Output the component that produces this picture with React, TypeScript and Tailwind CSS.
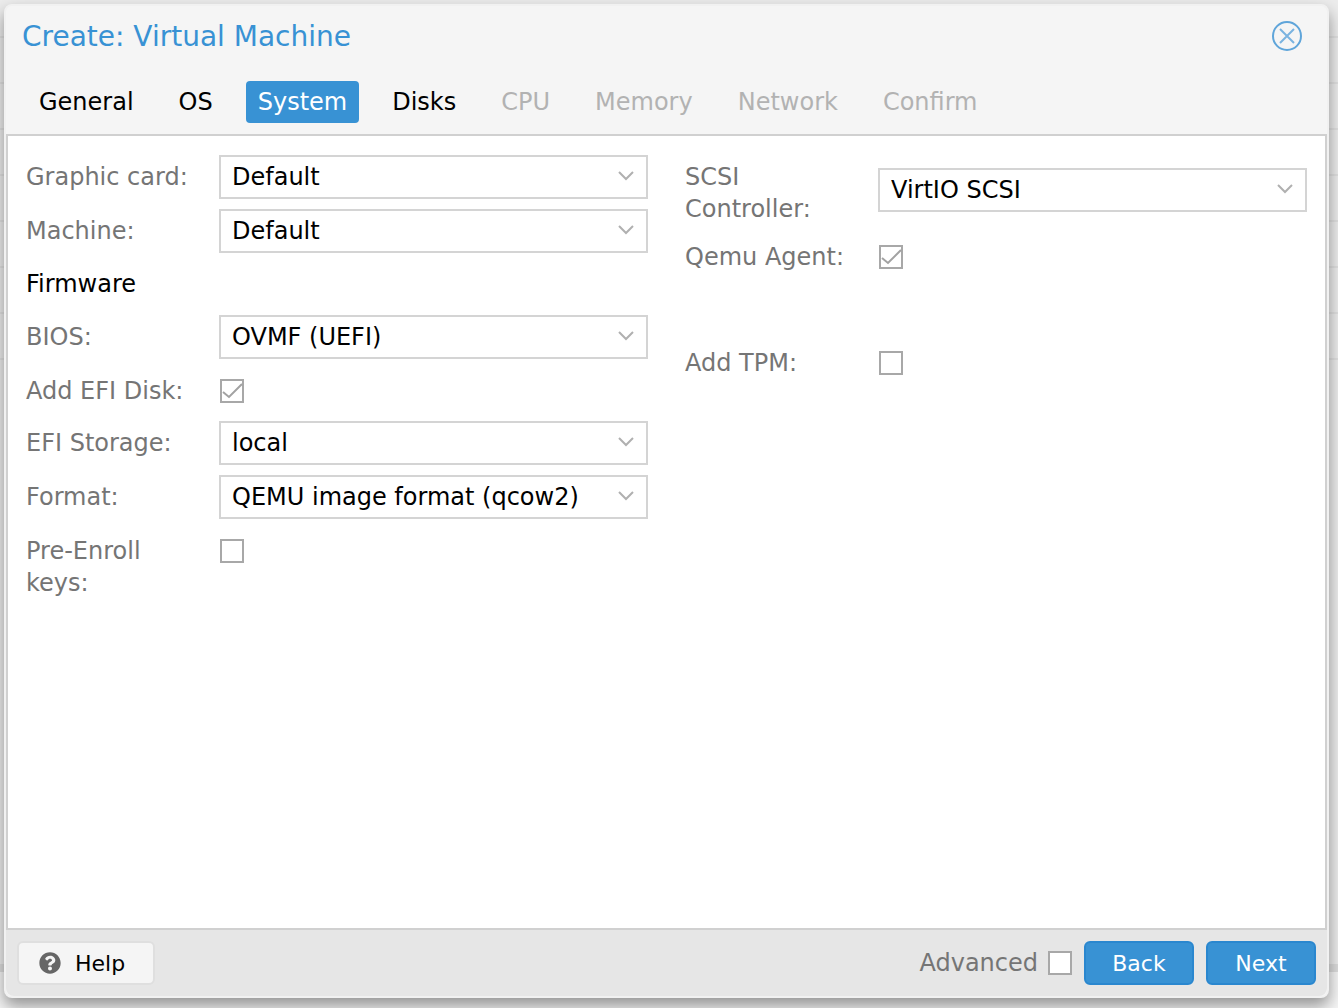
import { useState } from 'react'
import type { ReactNode } from 'react'
import { FaQuestionCircle } from 'react-icons/fa'

interface Tab {
  name: string
  enabled: boolean
}

const TABS: Tab[] = [
  { name: 'General', enabled: true },
  { name: 'OS', enabled: true },
  { name: 'System', enabled: true },
  { name: 'Disks', enabled: true },
  { name: 'CPU', enabled: false },
  { name: 'Memory', enabled: false },
  { name: 'Network', enabled: false },
  { name: 'Confirm', enabled: false },
]

const BACKDROP_ROWS = 8

interface FieldProps {
  id: string
  label: string
  children: ReactNode
}

function SelectField({ id, label, children }: FieldProps) {
  return (
    <div className="flex items-start">
      <label htmlFor={id} className="w-[193px] shrink-0 pt-1.5 pr-6 leading-8 text-[#757575]">
        {label}
      </label>
      <div className="relative min-w-0 flex-1 self-center">
        <select
          id={id}
          className="block h-11 w-full appearance-none border-2 border-[#d4d4d4] bg-white pr-11 pl-[11px] text-black outline-none"
        >
          {children}
        </select>
        <svg
          viewBox="0 0 16 10"
          className="pointer-events-none absolute top-4 right-3.5 h-2.5 w-4 fill-none stroke-[#b0b0b0] stroke-2"
        >
          <path d="M1 1 L8 8 L15 1" />
        </svg>
      </div>
    </div>
  )
}

interface CheckboxProps {
  id: string
  initial?: boolean
}

function Checkbox({ id, initial = false }: CheckboxProps) {
  const [checked, setChecked] = useState(initial)

  return (
    <span className="relative block size-6 shrink-0">
      <input
        id={id}
        type="checkbox"
        checked={checked}
        onChange={(e) => setChecked(e.target.checked)}
        className="block size-6 appearance-none border-2 border-[#a8a8a8] bg-white"
      />
      {checked && (
        <svg
          viewBox="0 0 24 24"
          className="pointer-events-none absolute inset-0 size-6 fill-none stroke-[#a2a2a2] stroke-2"
        >
          <path d="M3 13 L9 18 L22 5" />
        </svg>
      )}
    </span>
  )
}

function CheckField({ id, label, initial }: CheckboxProps & { label: string }) {
  return (
    <div className="flex min-h-[42px] items-start">
      <label htmlFor={id} className="w-[194px] shrink-0 pt-1.5 pr-6 leading-8 text-[#757575]">
        {label}
      </label>
      <div className="pt-2.5">
        <Checkbox id={id} initial={initial} />
      </div>
    </div>
  )
}

function App() {
  const [active, setActive] = useState('System')

  return (
    <div className="relative min-h-screen overflow-hidden bg-[#f5f5f5] pt-1 pr-[9px] pb-2.5 pl-1 font-['DejaVu_Sans',sans-serif] text-[24px]">
      {/* Page behind the window */}
      <div aria-hidden="true" className="absolute inset-x-0 -top-2 bottom-9 border-b-8 border-[#dcdcdc] bg-[#ececec]">
        {Array.from({ length: BACKDROP_ROWS }, (_, i) => (
          <div key={i} className="h-[46px] border-b-2 border-[#e0e0e0]" />
        ))}
      </div>

      <div className="relative flex min-h-[calc(100vh-14px)] flex-col rounded-lg border-2 border-[#f1f1f1] bg-[#f5f5f5] shadow-[0_8px_16px_#00000066]">
        {/* Title */}
        <header className="flex h-15 items-center justify-between pr-6 pl-4">
          <h1 className="pt-0.5 text-[28px] text-[#3892d4]">Create: Virtual Machine</h1>
          <button type="button" aria-label="Close">
            <svg viewBox="0 0 32 32" className="size-8 fill-none stroke-2">
              <circle cx="16" cy="16" r="14" className="stroke-[#5fa5da]" />
              <path d="M9 9 L23 23 M23 9 L9 23" className="stroke-[#7ab3e0]" />
            </svg>
          </button>
        </header>

        {/* Wizard steps */}
        <nav className="flex gap-[21px] px-[21px] pt-[15px] pb-[11px]">
          {TABS.map((tab) => (
            <button
              key={tab.name}
              type="button"
              disabled={!tab.enabled}
              onClick={() => setActive(tab.name)}
              className={`h-[42px] rounded-sm px-3 ${
                tab.name === active
                  ? 'bg-[#3892d4] text-white'
                  : tab.enabled
                    ? 'text-black'
                    : 'text-[#b2b2b2]'
              }`}
            >
              {tab.name}
            </button>
          ))}
        </nav>

        {/* Form */}
        <main className="grid flex-1 grid-cols-2 content-start gap-x-[37px] border-2 border-[#d0d0d0] bg-white px-[18px] pt-[19px]">
          <div className="flex flex-col gap-2.5">
            <SelectField id="vga" label="Graphic card:">
              <option>Default</option>
            </SelectField>
            <SelectField id="machine" label="Machine:">
              <option>Default</option>
            </SelectField>
            <h2 className="flex h-[42px] items-center">Firmware</h2>
            <SelectField id="bios" label="BIOS:">
              <option>OVMF (UEFI)</option>
            </SelectField>
            <CheckField id="efidisk" label="Add EFI Disk:" initial />
            <SelectField id="storage" label="EFI Storage:">
              <option>local</option>
            </SelectField>
            <SelectField id="format" label="Format:">
              <option>QEMU image format (qcow2)</option>
            </SelectField>
            <CheckField id="keys" label="Pre-Enroll keys:" />
          </div>
          <div className="flex flex-col gap-2.5">
            <SelectField id="scsi" label="SCSI Controller:">
              <option>VirtIO SCSI</option>
            </SelectField>
            <CheckField id="agent" label="Qemu Agent:" initial />
            <div className="h-11" />
            <CheckField id="tpm" label="Add TPM:" />
          </div>
        </main>

        {/* Buttons */}
        <footer className="flex items-center gap-3 rounded-b-lg bg-[#e6e6e6] px-[11px] py-[11px] text-[22px]">
          <button
            type="button"
            className="mr-auto flex h-11 items-center gap-3.5 rounded-md border-2 border-[#dfdfdf] bg-[#f5f5f5] pr-7 pl-5 text-black"
          >
            <FaQuestionCircle className="text-[#666666]" />
            Help
          </button>
          <div className="flex items-center gap-2.5">
            <label htmlFor="advanced" className="text-[24px] text-[#757575]">
              Advanced
            </label>
            <Checkbox id="advanced" />
          </div>
          <button type="button" className="h-11 w-[110px] rounded-md border-2 border-[#2a87cf] bg-[#3892d4] text-white">
            Back
          </button>
          <button type="button" className="h-11 w-[110px] rounded-md border-2 border-[#2a87cf] bg-[#3892d4] text-white">
            Next
          </button>
        </footer>
      </div>
    </div>
  )
}

export default App
